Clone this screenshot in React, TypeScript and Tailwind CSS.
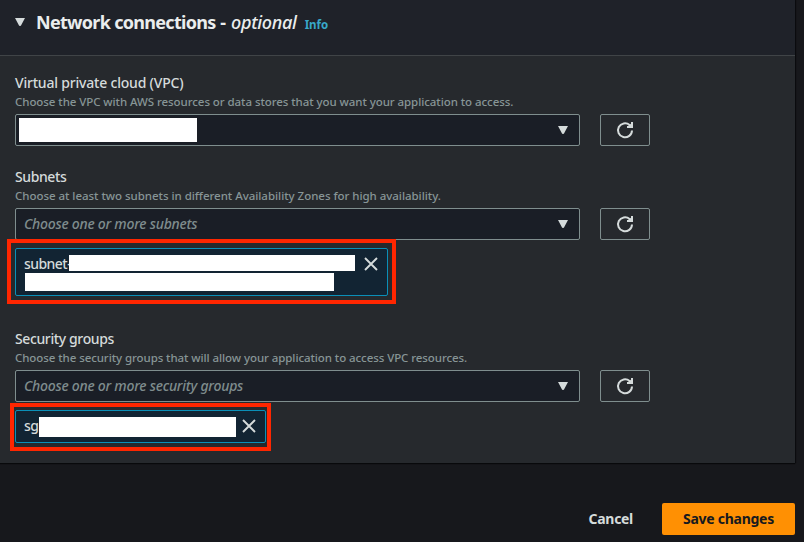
import type { ReactNode } from "react";

function Caret({ className = "" }: { className?: string }) {
  return (
    <svg className={className} width="10" height="8" viewBox="0 0 10 8" fill="#d5dbdb">
      <path d="M0 0H10L6 7.5Q5 8.6 4 7.5Z" />
    </svg>
  );
}

function RefreshButton() {
  return (
    <button
      aria-label="Refresh"
      className="flex h-8 w-[50px] items-center justify-center rounded-[2px] border border-[#7f8e8e]"
    >
      <svg width="18" height="18" viewBox="0 0 18 18" fill="none" stroke="#d5dbdb" strokeWidth="2">
        <path d="M16 9.4A7 7 0 1 1 13.6 4L15.4 6" />
        <path d="M16 1V6H11" />
        <path d="M11.5 5.6L16 2V6Z" fill="#d5dbdb" stroke="none" />
      </svg>
    </button>
  );
}

function Select({ children }: { children: ReactNode }) {
  return (
    <div className="flex gap-5">
      <div className="flex h-8 w-[565px] items-center justify-between rounded-[2px] border border-[#7f8e8e] bg-[#1a1e26] pr-[11px] pl-[3px]">
        {children}
        <Caret />
      </div>
      <RefreshButton />
    </div>
  );
}

function CloseIcon() {
  return (
    <svg width="14" height="14" viewBox="0 0 14 14" stroke="#d5dbdb" strokeWidth="1.9">
      <path d="M1 1L13 13M13 1L1 13" />
    </svg>
  );
}

function Label({ children }: { children: ReactNode }) {
  return <div className="h-5 text-[14px] leading-5 font-medium text-[#d5dbdb]">{children}</div>;
}

function Hint({ children }: { children: ReactNode }) {
  return <div className="h-[21px] pt-px text-[11.5px] leading-4 font-medium text-[#879596]">{children}</div>;
}

export default function App() {
  return (
    <div className="h-[542px] w-[804px] overflow-hidden bg-[#17181c] font-['Noto_Sans',sans-serif] whitespace-nowrap">
      <section className="h-[463px] w-[795px] bg-[#26292d] shadow-[0_1px_1px_#08090b,1px_0_1px_#0c0d10]">
        <header className="flex h-14 border-b border-[#404447] bg-[#1f2229] pl-[15px]">
          <Caret className="mt-[18px] mr-[11px]" />
          <h2 className="mt-[11px] text-[18px] leading-[22px] font-bold text-[#eaeded]">
            <span className="tracking-[-0.7px]">Network connections</span>
            <span className="tracking-[0.1px]"> - </span>
            <span className="font-medium tracking-[-0.3px] italic">optional</span>
          </h2>
          <a className="mt-[17px] ml-2 text-[11.5px] leading-4 font-bold text-[#38a9c9]">Info</a>
        </header>

        <div className="pt-[17px] pl-[15px]">
          <div className="h-[94px]">
            <Label><span className="tracking-[-0.2px]">Virtual private cloud (VPC)</span></Label>
            <Hint><span className="tracking-[-0.065px]">Choose the VPC with AWS resources or data stores that you want your application to access.</span></Hint>
            <Select>
              <span className="h-6 w-[178px] bg-white" />
            </Select>
          </div>

          <div className="h-[162px]">
            <Label><span className="tracking-[-0.4px]">Subnets</span></Label>
            <Hint><span className="tracking-[-0.035px]">Choose at least two subnets in different Availability Zones for high availability.</span></Hint>
            <Select>
              <span className="pb-0.5 pl-[5px] text-[14px] font-medium tracking-[-0.25px] text-[#7f8c8d] italic">Choose one or more subnets</span>
            </Select>
            <div className="relative mt-2 flex h-12 w-[373px] justify-between rounded-[2px] border border-[#0a8fb8] bg-[#122433] pr-[9px] pl-2">
              <div>
                <div className="mt-1.5 flex h-4 items-center">
                  <span className="mt-0.5 -mr-20 w-[125px] text-[14px] leading-5 font-medium tracking-[-0.55px] text-[#d5dbdb]">subnet-</span>
                  <span className="relative h-4 w-[286px] bg-white" />
                </div>
                <div className="mt-0.5 ml-px h-[18px] w-[309px] bg-white" />
              </div>
              <div className="mt-2"><CloseIcon /></div>
              <div className="absolute -top-[10px] -left-[9px] h-[65px] w-[389px] border-4 border-[#ff2600]" />
            </div>
          </div>

          <div>
            <Label><span className="tracking-[-0.38px]">Security groups</span></Label>
            <Hint><span className="tracking-[-0.075px]">Choose the security groups that will allow your application to access VPC resources.</span></Hint>
            <Select>
              <span className="pb-0.5 pl-[5px] text-[14px] font-medium tracking-[-0.25px] text-[#7f8c8d] italic">Choose one or more security groups</span>
            </Select>
            <div className="relative mt-2 flex h-[33px] w-[251px] items-center rounded-[2px] border border-[#0a8fb8] bg-[#122433] pl-2">
              <span className="-mr-5 w-[35px] pb-px text-[14px] leading-5 font-medium tracking-[-0.5px] text-[#d5dbdb]">sg</span>
              <span className="relative mr-1.5 h-5 w-[197px] bg-white" />
              <div className="pb-0.5"><CloseIcon /></div>
              <div className="absolute -top-2 -left-[6px] h-12 w-[261px] border-4 border-[#ff2600]" />
            </div>
          </div>
        </div>
      </section>

      <footer className="mt-10 flex h-8 w-[795px] justify-end text-[14px] font-bold">
        <button className="mr-[29px] pb-0.5 tracking-[-0.3px] text-[#d5dbdb]">Cancel</button>
        <button className="w-[133px] rounded-[2px] bg-[#ff9003] pb-0.5 tracking-[-0.27px] text-[#16191f]">Save changes</button>
      </footer>
    </div>
  );
}
